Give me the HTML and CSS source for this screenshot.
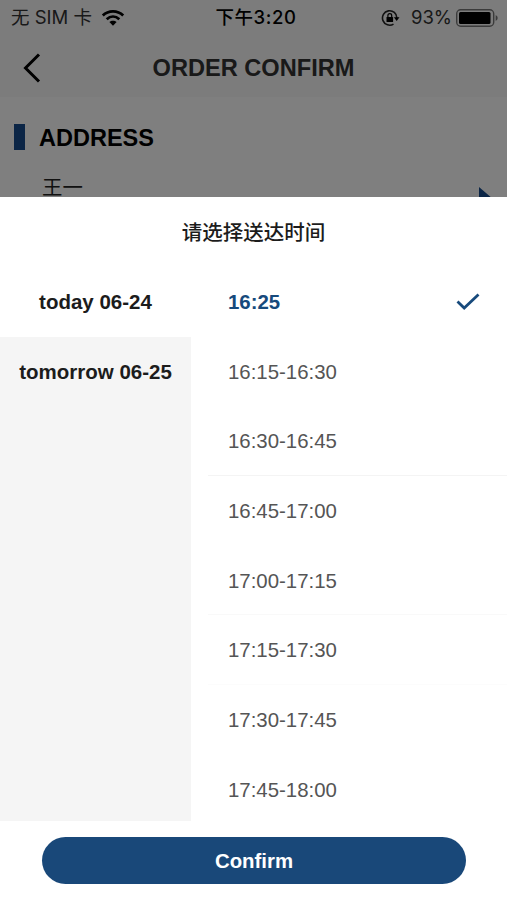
FILE: index.html
```html
<!DOCTYPE html>
<html lang="zh-CN">
<head>
    <meta charset="UTF-8">
    <meta name="viewport" content="width=device-width, initial-scale=1.0">
    <title>Order Confirm</title>
    <link rel="stylesheet" href="styles.css">
</head>
<body>

    <!-- Page behind the picker -->
    <div class="page">
        <div class="status-bar">
            <div class="status-left">
                <span class="carrier">无 SIM 卡</span>
                <svg class="wifi" width="24" height="18" viewBox="0 0 24 18">
                    <path d="M1.800 6.500C7.500 1 16.500 1 22.200 6.500M5.700 10.200C9.500 6.700 14.500 6.700 18.300 10.200" fill="none" stroke="#000" stroke-width="2.800"/>
                    <path d="M8.400 13.100C10.400 11.300 13.600 11.300 15.600 13.100L12 16.700Z"/>
                </svg>
            </div>
            <span class="clock">下午3:20</span>
            <div class="status-right">
                <svg class="lock" width="19" height="18" viewBox="0 0 19 18">
                    <path d="M15.900 9A7.200 7.200 0 1 0 12.500 15.100" fill="none" stroke="#222" stroke-width="1.600"/>
                    <path d="M12.900 8.300H18.500L15.700 11.900Z"/>
                    <rect x="5.500" y="8" width="6.600" height="5" rx=".6"/>
                    <path d="M6.900 8.300V6.500a1.900 1.900 0 0 1 3.800 0V8.300" fill="none" stroke="#000" stroke-width="1.200"/>
                </svg>
                <span class="percent">93%</span>
                <svg class="battery" width="42" height="18" viewBox="0 0 42 18">
                    <rect x=".7" y=".7" width="37" height="16.600" rx="4" fill="none" stroke="#777" stroke-width="1.400"/>
                    <rect x="3" y="3" width="31.500" height="12" rx="1.500"/>
                    <path d="M39.700 6V12Q41.700 11 41.700 9T39.700 6Z" fill="#777"/>
                </svg>
            </div>
        </div>

        <div class="nav">
            <svg class="back" width="20" height="32" viewBox="0 0 20 32">
                <path d="M17 2.500L3.500 16L17 29.500" fill="none" stroke="#000" stroke-width="3"/>
            </svg>
            <h1>ORDER CONFIRM</h1>
        </div>

        <div class="section-title">
            <span class="bar"></span>
            <h2>ADDRESS</h2>
        </div>
        <div class="address">
            <span>王一</span>
            <svg class="arrow" width="16" height="24" viewBox="0 0 16 24">
                <path d="M0 0L14 12L0 24Z" fill="#174a8c"/>
            </svg>
        </div>
    </div>
    <div class="mask"></div>

    <!-- Delivery time picker -->
    <div class="sheet">
        <div class="sheet-title">请选择送达时间</div>
        <div class="picker">
            <div class="days">
                <div class="day active">today 06-24</div>
                <div class="day">tomorrow 06-25</div>
            </div>
            <div class="times">
                <div class="time selected">
                    <span>16:25</span>
                    <svg width="26" height="20" viewBox="0 0 26 20">
                        <path d="M2.500 9.500L9.200 16L23.500 2.500" fill="none" stroke="#174a7c" stroke-width="2.800"/>
                    </svg>
                </div>
                <div class="time">16:15-16:30</div>
                <div class="time line">16:30-16:45</div>
                <div class="time">16:45-17:00</div>
                <div class="time line light">17:00-17:15</div>
                <div class="time line faint">17:15-17:30</div>
                <div class="time">17:30-17:45</div>
                <div class="time">17:45-18:00</div>
            </div>
        </div>
        <button class="confirm" type="button">Confirm</button>
    </div>

</body>
</html>
```
FILE: styles.css
```css
* {
    box-sizing: border-box;
}

body {
    margin: 0;
    height: 900px;
    overflow: hidden;
    background-color: #fff;
    color: #1c1c1c;
    font-family: "Liberation Sans", "Noto Sans CJK SC", sans-serif;
    font-size: 20.4px;
}

h1, h2 {
    margin: 0;
    font-size: 23.6px;
    line-height: 28px;
}

/* Page behind */
.page {
    height: 197px;
    overflow: hidden;
    background-color: #fff;
}

.status-bar {
    display: grid;
    grid-template-columns: 1fr auto 1fr;
    align-items: center;
    height: 35px;
    padding: 0 9px 0 11px;
    background-color: #f8f8f8;
    font-family: Inter, "Noto Sans CJK SC", sans-serif;
    font-size: 18.5px;
    line-height: 35px;
}

.status-left,
.status-right {
    display: flex;
    align-items: center;
}

.carrier {
    font-size: 18.5px;
    color: #333;
}

.wifi {
    margin-left: 9px;
}

.clock {
    margin-left: 3px;
    font-weight: 500;
    font-size: 18.5px;
    letter-spacing: 0.6px;
    color: #000;
}

.status-right {
    justify-content: flex-end;
    color: #333;
}

.lock {
    margin-right: 11px;
}

.percent {
    margin-right: 4px;
}

.nav {
    position: relative;
    display: flex;
    align-items: center;
    justify-content: center;
    height: 62px;
    padding-top: 4px;
    background-color: #f8f8f8;
    color: #333;
}

.back {
    position: absolute;
    left: 22px;
    top: 17px;
}

.section-title {
    display: flex;
    align-items: center;
    gap: 14px;
    height: 76px;
    padding: 4px 0 0 14px;
    color: #000;
}

.section-title h2 {
    padding-top: 1px;
    font-size: 23.5px;
}

.bar {
    width: 11px;
    height: 26px;
    background-color: #174a8c;
}

.address {
    display: flex;
    justify-content: space-between;
    padding: 0 12px 0 42px;
    color: #222;
    line-height: 30px;
}

.arrow {
    margin-top: 14px;
}

.mask {
    position: absolute;
    top: 0;
    left: 0;
    width: 100%;
    height: 197px;
    background-color: rgba(0, 0, 0, 0.5);
}

/* Picker */
.sheet {
    height: 703px;
    background-color: #fff;
}

.sheet-title {
    height: 70px;
    padding-top: 1px;
    line-height: 70px;
    text-align: center;
    font-size: 20.5px;
    font-weight: 500;
}

.picker {
    display: flex;
    height: 554px;
}

.days {
    width: 191px;
    background-color: #f5f5f5;
}

.day {
    height: 70px;
    line-height: 70px;
    text-align: center;
    font-size: 20.5px;
    font-weight: bold;
}

.day.active {
    background-color: #fff;
}

.times {
    flex: 1;
    padding-left: 17px;
}

.time {
    display: flex;
    align-items: center;
    justify-content: space-between;
    height: 69.7px;
    padding: 2px 26px 0 20px;
    border-bottom: 1px solid transparent;
    color: #555;
}

.time.selected {
    color: #174a7c;
    font-weight: bold;
}

.time.line {
    border-bottom-color: #f4f4f4;
}

.time.light {
    border-bottom-color: #f9f9f9;
}

.time.faint {
    border-bottom-color: #fcfcfc;
}

.confirm {
    display: block;
    width: 424px;
    height: 47px;
    margin: 16px auto 0 42px;
    padding: 1px 0 0;
    border: none;
    border-radius: 24px;
    background-color: #194879;
    color: #fff;
    font-family: inherit;
    font-size: 20.4px;
    font-weight: bold;
}
```
